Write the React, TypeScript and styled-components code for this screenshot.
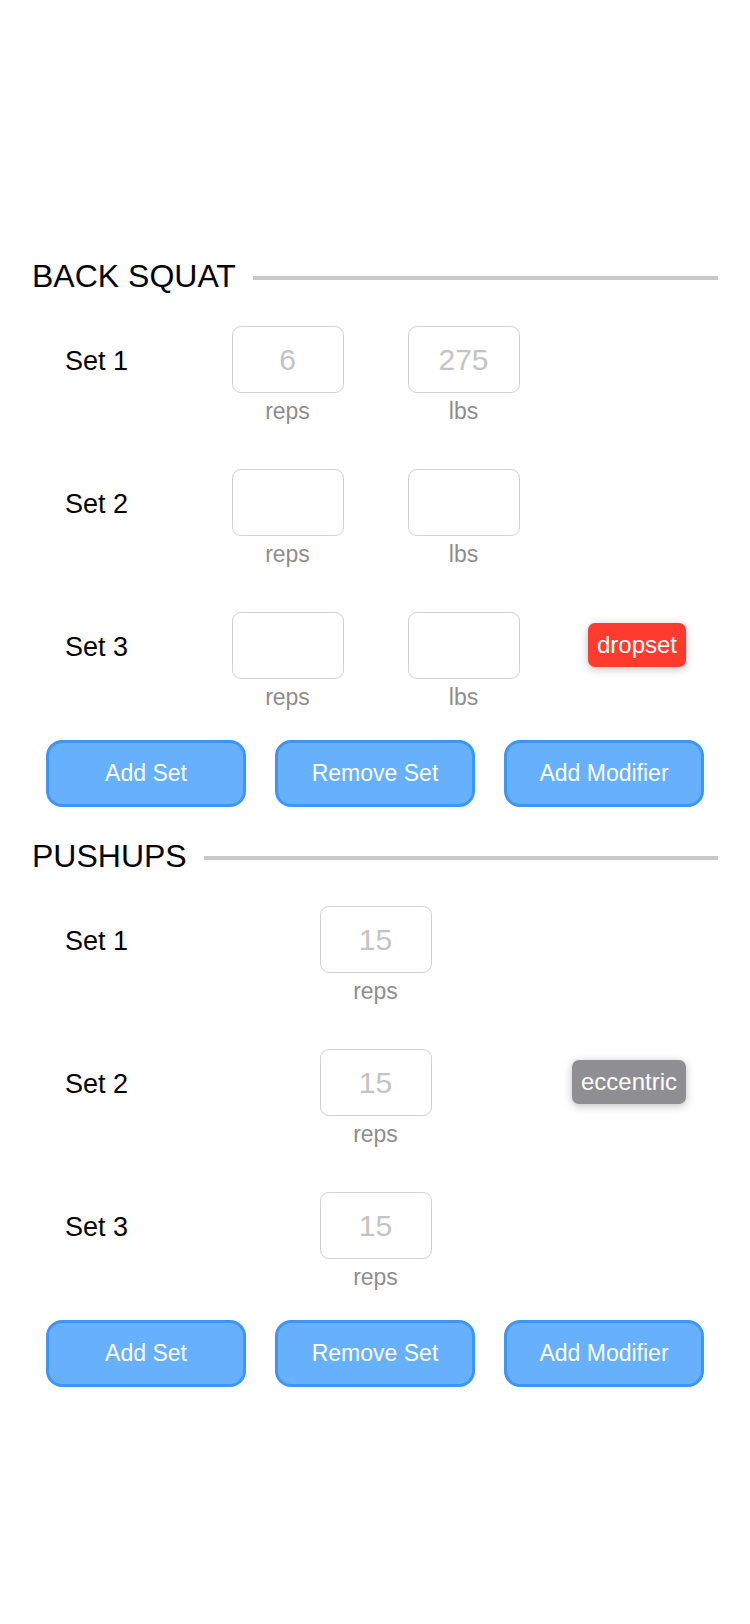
import React from "react";
import styled, { createGlobalStyle } from "styled-components";

type SetRow = {
  reps?: string;
  lbs?: string;
  modifier?: "dropset" | "eccentric";
};

type Exercise = {
  name: string;
  weighted: boolean;
  sets: SetRow[];
};

const exercises: Exercise[] = [
  {
    name: "BACK SQUAT",
    weighted: true,
    sets: [{ reps: "6", lbs: "275" }, {}, { modifier: "dropset" }],
  },
  {
    name: "PUSHUPS",
    weighted: false,
    sets: [{ reps: "15" }, { reps: "15", modifier: "eccentric" }, { reps: "15" }],
  },
];

const App = () => {
  return (
    <>
      <GlobalStyle />
      <StPage>
        {exercises.map((exercise) => (
          <StSection key={exercise.name}>
            <StHeader>
              <StTitle>{exercise.name}</StTitle>
              <StRule />
            </StHeader>

            <StSetList>
              {exercise.sets.map((set, i) => (
                <StSetRow key={i}>
                  <StSetLabel>Set {i + 1}</StSetLabel>
                  <StInputs>
                    <StField>
                      <StInput placeholder={set.reps ?? ""} />
                      <StUnit>reps</StUnit>
                    </StField>
                    {exercise.weighted && (
                      <StField>
                        <StInput placeholder={set.lbs ?? ""} />
                        <StUnit>lbs</StUnit>
                      </StField>
                    )}
                  </StInputs>
                  <StModifierCell>
                    {set.modifier && (
                      <StModifier kind={set.modifier}>{set.modifier}</StModifier>
                    )}
                  </StModifierCell>
                </StSetRow>
              ))}
            </StSetList>

            <StButtonRow>
              <StButton>Add Set</StButton>
              <StButton>Remove Set</StButton>
              <StButton>Add Modifier</StButton>
            </StButtonRow>
          </StSection>
        ))}
      </StPage>
    </>
  );
};

export default App;

const GlobalStyle = createGlobalStyle`
  html, body {
    margin: 0;
    padding: 0;
    background: #ffffff;
  }
  body {
    font-family: "Liberation Sans", Arial, Helvetica, sans-serif;
  }
`;

const StPage = styled.div`
  width: 750px;
  min-height: 1624px;
  box-sizing: border-box;
  padding-top: 256px;
  display: flex;
  flex-direction: column;
  gap: 29px;
`;

const StSection = styled.section`
  display: flex;
  flex-direction: column;
`;

const StHeader = styled.div`
  display: flex;
  align-items: center;
  height: 40px;
  padding: 0 32px;
  gap: 17px;
  margin-bottom: 30px;
`;

const StTitle = styled.h2`
  margin: 0;
  font-size: 32px;
  line-height: 40px;
  font-weight: 400;
  color: #000000;
  white-space: nowrap;
`;

const StRule = styled.div`
  flex: 1;
  height: 4px;
  margin-top: 4px;
  background-color: #c8c8c8;
`;

const StSetList = styled.div`
  display: flex;
  flex-direction: column;
  gap: 44px;
`;

const StSetRow = styled.div`
  display: grid;
  grid-template-columns: 1fr auto 1fr;
  align-items: start;
  padding: 0 64px 0 65px;
`;

const StSetLabel = styled.div`
  height: 67px;
  line-height: 67px;
  padding-top: 2px;
  font-size: 27px;
  color: #000000;
`;

const StInputs = styled.div`
  display: flex;
  gap: 64px;
`;

const StField = styled.div`
  display: flex;
  flex-direction: column;
  align-items: center;
`;

const StInput = styled.input`
  width: 112px;
  height: 67px;
  box-sizing: border-box;
  border: 1px solid #d2d2d2;
  border-radius: 9px;
  background: #ffffff;
  font-family: "Liberation Sans", Arial, sans-serif;
  font-size: 30px;
  text-align: center;
  color: #000000;
  outline: none;

  &::placeholder {
    color: #c4c4c4;
  }
`;

const StUnit = styled.span`
  margin-top: 5px;
  font-size: 23px;
  line-height: 27px;
  color: #8e8e8e;
`;

const StModifierCell = styled.div`
  display: flex;
  justify-content: flex-end;
  align-items: center;
  height: 65px;
`;

const StModifier = styled.span<{ kind: "dropset" | "eccentric" }>`
  display: inline-flex;
  align-items: center;
  height: 44px;
  padding: 0 9px;
  border-radius: 7px;
  font-size: 24px;
  color: #ffffff;
  background-color: ${({ kind }) => (kind === "dropset" ? "#ff3b30" : "#8e8e93")};
  box-shadow: 0 2px 8px rgba(0, 0, 0, 0.25);
`;

const StButtonRow = styled.div`
  display: grid;
  grid-template-columns: repeat(3, 200px);
  gap: 29px;
  justify-content: center;
  margin-top: 29px;
`;

const StButton = styled.button`
  height: 67px;
  box-sizing: border-box;
  border: 3px solid #3d95f7;
  border-radius: 16px;
  background-color: #66b0fd;
  color: #ffffff;
  font-family: "Liberation Sans", Arial, sans-serif;
  font-size: 23px;
  cursor: pointer;
`;
